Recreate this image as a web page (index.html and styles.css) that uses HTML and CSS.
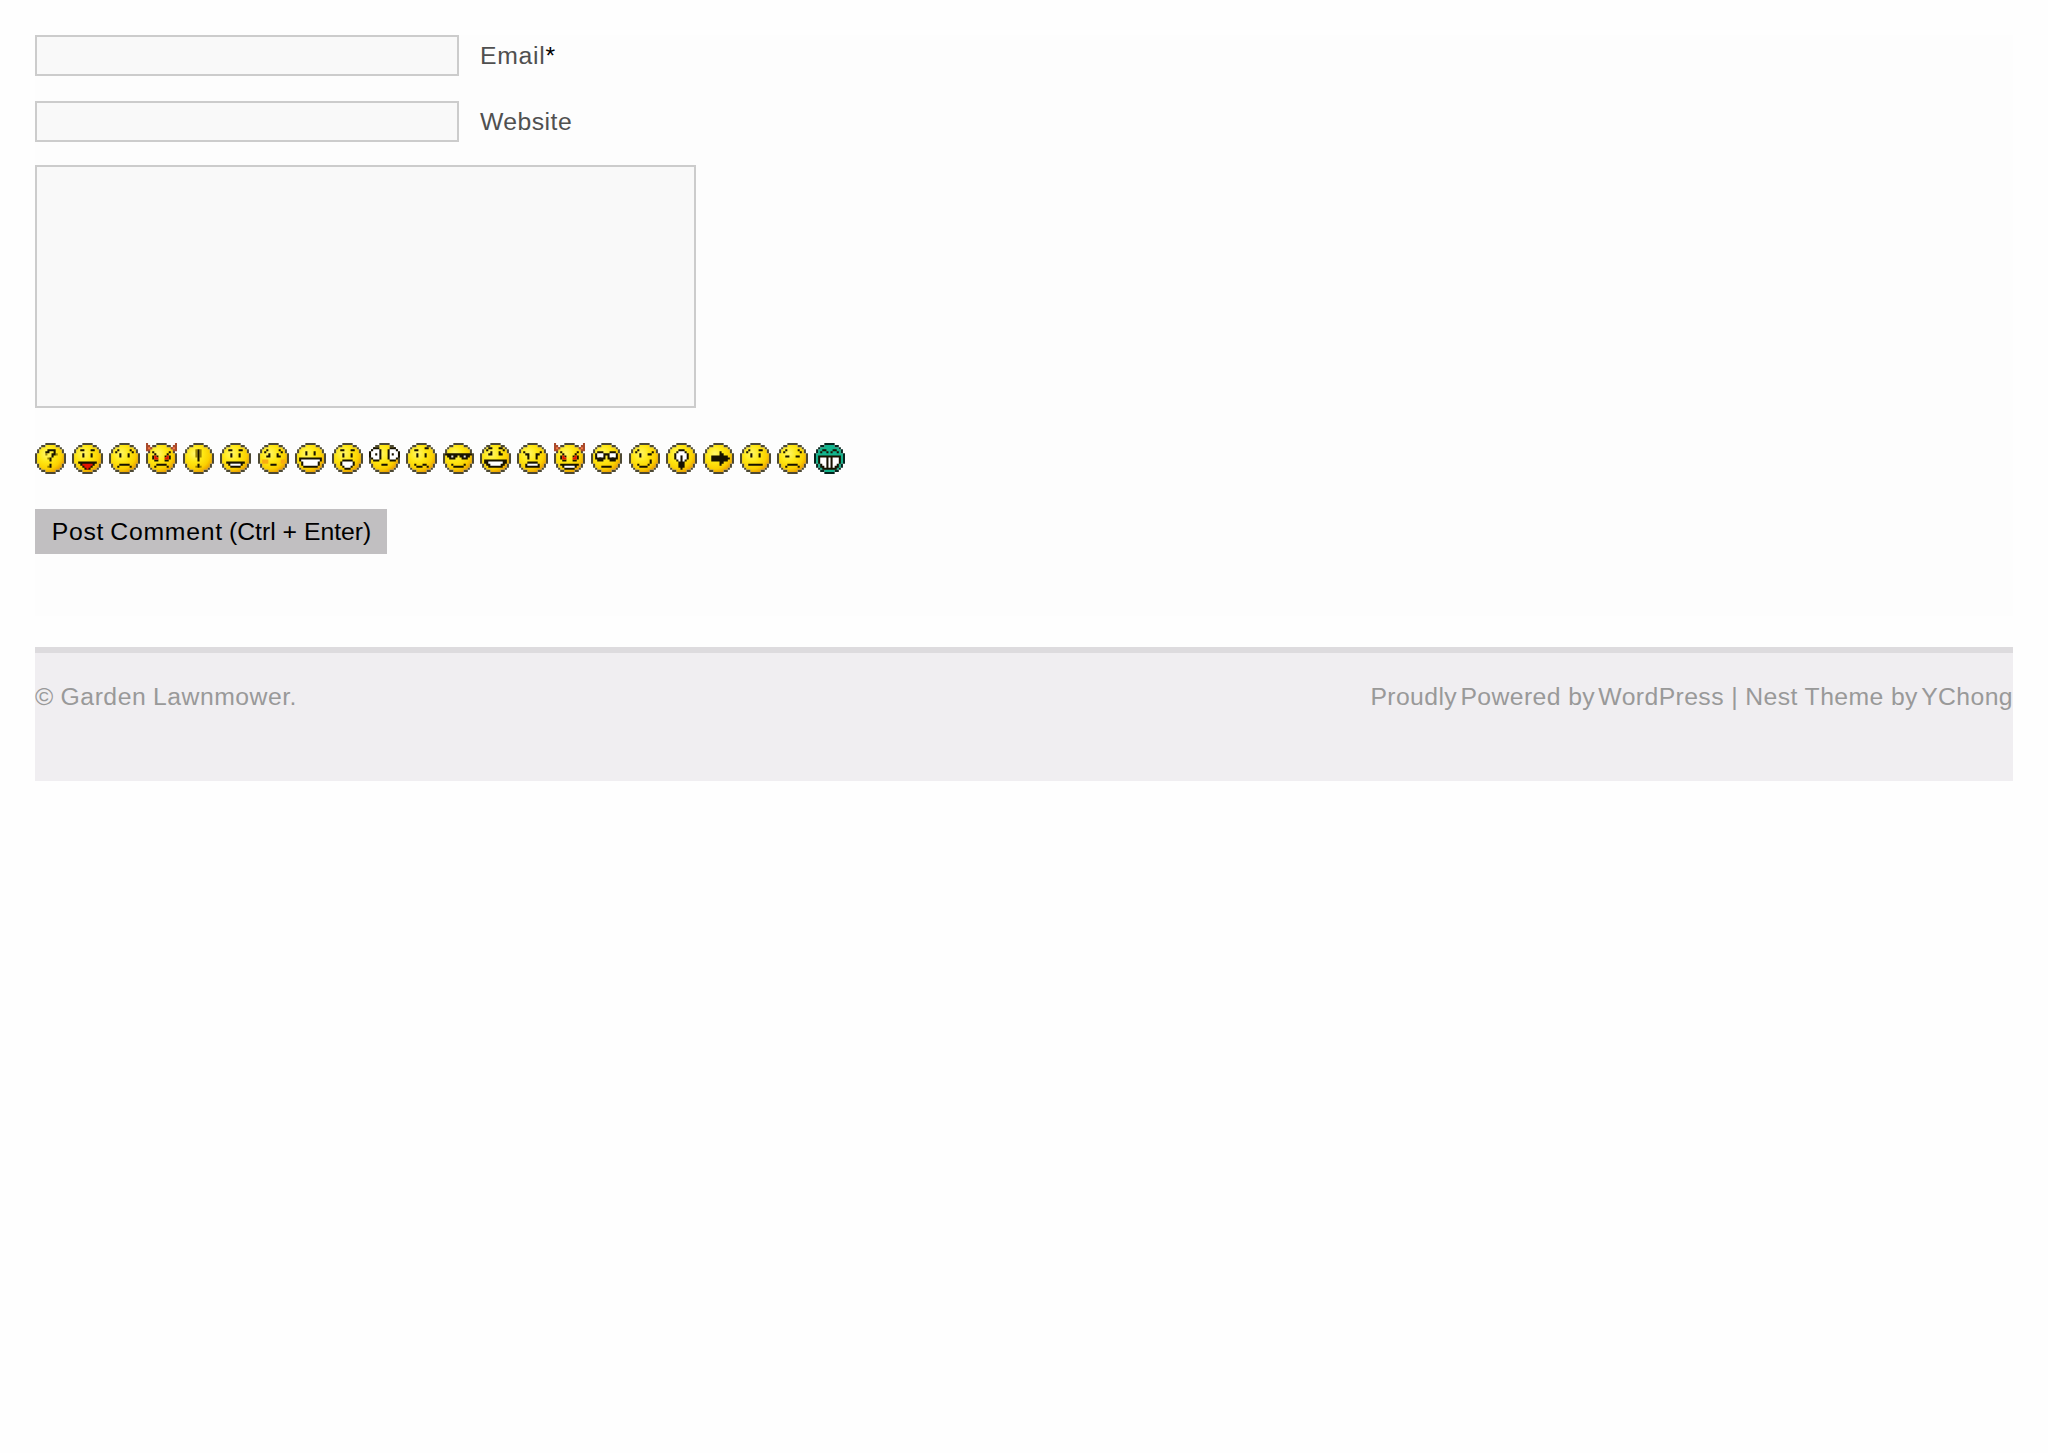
FILE: index.html
```
<!DOCTYPE html>
<html lang="en">
<head>
    <meta charset="UTF-8">
    <title>Garden Lawnmower</title>
    <link rel="stylesheet" href="styles.css">
</head>
<body>
<!-- shared smiley shapes, one unit is one pixel -->
<svg class="sprite" aria-hidden="true">
    <defs>
        <radialGradient id="yellow" cx="0.36" cy="0.32" r="0.75">
            <stop offset="0" stop-color="#fff66a"/>
            <stop offset="0.4" stop-color="#ffe815"/>
            <stop offset="0.75" stop-color="#fbd000"/>
            <stop offset="1" stop-color="#e99a00"/>
        </radialGradient>
        <g id="face">
            <path class="fill" d="M4.5.5h5v1h2v1h1v2h1v5h-1v2h-1v1h-2v1h-5v-1h-2v-1h-1v-2h-1v-5h1v-2h1v-1h2z"/>
            <path class="ring" d="M5 0h4M3 1h1M10 1h1M2 2h0M12 2h0M1 3v1M13 3v1M0 5v4M14 5v4M1 10v1M13 10v1M2 12h0M12 12h0M3 13h1M10 13h1M5 14h4"/>
        </g>
        <g id="horns">
            <path class="horn" d="M0 0v3M1 1v2M2 2h0M14 0v3M13 1v2M12 2h0"/>
            <path class="horn-light" d="M1 2h0M13 2h0"/>
        </g>
    </defs>
</svg>
<div class="page">
    <form class="comment-form">
        <div class="field">
            <input id="email" class="input" type="text">
            <label for="email" class="wide">Email<span class="required">*</span></label>
        </div>
        <div class="field">
            <input id="url" class="input" type="text">
            <label for="url">Website</label>
        </div>
        <textarea class="comment" aria-label="Comment"></textarea>
        <div class="smilies">
            <svg viewBox="-.5 -.5 15 15"><use href="#face"/><path class="soft" d="M5 5h0M10 5h0M6 7h0M6 11h0"/><path d="M5 4h1M6 3h3M9 4v1M8 5v1M7 7v1M7 10v1"/></svg>
            <svg viewBox="-.5 -.5 15 15"><use href="#face"/><path d="M4 3h1M9 3h1M5 5v1M9 5v1M3 9h8M4 10h6M5 11h4M6 12h2"/><path class="red" d="M5 10h4M6 11h2M7 12h0"/></svg>
            <svg viewBox="-.5 -.5 15 15"><use href="#face"/><path d="M3 4h0M4 3h0M10 3h0M11 4h0M5 5v1M9 5v1M4 11h0M5 10h4M10 11h0"/></svg>
            <svg viewBox="-.5 -.5 15 15"><use href="#face"/><use href="#horns"/><path d="M3 4h0M4 5h0M5 6h0M9 6h0M10 5h0M11 4h0M3 6v1M4 8h1M11 6v1M9 8h1M4 11h0M5 10h4M10 11h0"/><path class="red" d="M4 6v1M5 7h0M10 6v1M9 7h0"/></svg>
            <svg viewBox="-.5 -.5 15 15"><use href="#face"/><path class="soft" d="M6 3v3M8 3v3M6 11h0M8 11h0"/><path d="M7 3v5M7 10v1"/></svg>
            <svg viewBox="-.5 -.5 15 15"><use href="#face"/><path d="M4 3h1M9 3h1M5 5v1M9 5v1M3 9h8M4 10h6M5 11h4"/><path class="white" d="M5 10h4"/></svg>
            <svg viewBox="-.5 -.5 15 15"><use href="#face"/><path class="blush" d="M2 8h2M2 9h2M11 8h1M11 9h1"/><path d="M3 4h0M4 3h0M10 3h0M11 4h0M4 6h1M5 5h0M9 5h0M9 6h1M6 10h2"/></svg>
            <svg viewBox="-.5 -.5 15 15"><use href="#face"/><path d="M5 4v1M9 4v1M2 7h10M2 8h10M3 9h8M3 10h8M4 11h6"/><path class="white" d="M3 8h8M4 9h6M4 10h6"/></svg>
            <svg viewBox="-.5 -.5 15 15"><use href="#face"/><path d="M4 3h1M9 3h1M5 5v1M9 5v1M5 8h4M4 9h6M4 10h6M5 11h4M6 12h2"/><path class="white" d="M5 9h4M5 10h4M6 11h2"/></svg>
            <svg viewBox="-.5 -.5 15 15"><use href="#face"/><path d="M2 2h2M1 3h4M0 4h5M0 5h5M0 6h5M1 7h4M2 8h2M10 2h2M9 3h4M9 4h5M9 5h5M9 6h5M9 7h4M10 8h2M6 10h2"/><path class="white" d="M2 3h2M1 4h3M1 5h3M1 6h3M2 7h2M10 3h2M10 4h3M10 5h3M10 6h3M10 7h2"/><path d="M3 5h0M11 5h0"/></svg>
            <svg viewBox="-.5 -.5 15 15"><use href="#face"/><path d="M4 3h1M9 2h1M5 5v1M9 5v1M4 10h0M5 11h2M8 10h1M10 11h0"/></svg>
            <svg viewBox="-.5 -.5 15 15"><use href="#face"/><path d="M1 5h12M2 6h4M3 7h2M8 6h4M9 7h2M4 10h0M5 11h4M10 10h0"/><path class="shine" d="M4 6h0M10 6h0"/></svg>
            <svg viewBox="-.5 -.5 15 15"><use href="#face"/><path d="M3 3h0M4 2h1M5 4v1M4 5h0M9 2h1M11 3h0M9 4v1M10 5h0M2 8h10M2 9h10M3 10h8M4 11h6"/><path class="white" d="M4 9h6M5 10h4"/></svg>
            <svg viewBox="-.5 -.5 15 15"><use href="#face"/><path d="M3 4h0M4 5h1M5 6v1M11 4h0M9 5h1M9 6v1M5 9h4M4 10h6M4 11h6"/><path class="white" d="M5 10h4"/></svg>
            <svg viewBox="-.5 -.5 15 15"><use href="#face"/><use href="#horns"/><path d="M3 4h0M4 5h0M5 6h0M9 6h0M10 5h0M11 4h0M3 6v1M4 8h1M11 6v1M9 8h1M3 10h8M4 11h6M5 12h4"/><path class="red" d="M4 6v1M5 7h0M10 6v1M9 7h0"/><path class="white" d="M5 11h4"/></svg>
            <svg viewBox="-.5 -.5 15 15"><use href="#face"/><path d="M3 4h2M2 5h4M2 6h4M2 7h4M3 8h2M9 4h2M8 5h4M8 6h4M8 7h4M9 8h2M6 5h2M5 11h4"/><path class="white" d="M3 5h2M3 6h2M9 5h2M9 6h2"/><path d="M4 7h0M10 7h0"/></svg>
            <svg viewBox="-.5 -.5 15 15"><use href="#face"/><path d="M3 4h0M4 3h0M5 5v1M9 5h1M11 4h0M4 10h0M5 11h3M9 10h0M10 8v1"/></svg>
            <svg viewBox="-.5 -.5 15 15"><use href="#face"/><path d="M6 3h2M5 4h4M4 5h6M4 6h6M4 7h6M5 8h4M6 9h2M6 10h2M6 11h2M7 12h0"/><path class="white" d="M6 4h2M5 5h4M5 6h4M5 7h4M6 8h2"/><path d="M7 6v4"/></svg>
            <svg viewBox="-.5 -.5 15 15"><use href="#face"/><path d="M4 6h7M4 7h8M4 8h7M8 4v6M9 5v4M10 6v2"/></svg>
            <svg viewBox="-.5 -.5 15 15"><use href="#face"/><path d="M3 4h0M4 3h0M9 3h1M5 5v1M9 5v1M4 10h6"/></svg>
            <svg viewBox="-.5 -.5 15 15"><use href="#face"/><path d="M3 4h0M4 3h0M10 3h0M11 4h0M4 6h1M9 6h1M4 11h0M5 10h4M10 11h0"/></svg>
            <svg class="green" viewBox="-.5 -.5 15 15"><use href="#face"/><path d="M3 4h0M4 3h1M6 4h0M8 4h0M9 3h1M11 4h0M2 6h10M2 7h10M2 8h10M2 9h10M3 10h8M3 11h8M4 12h6"/><path class="white" d="M3 7v2M4 7v3M5 7v4M7 7v4M9 7v4M10 7v3M11 7v2"/></svg>
        </div>
        <button class="submit" type="button">Post Comment <span class="shortcut">(Ctrl + Enter)</span></button>
    </form>
    <footer class="footer">
        <div class="copyright">© Garden Lawnmower.</div>
        <div class="credit">Proudly <span class="kern">Powered</span> by <a class="kern">WordPress</a> | Nest Theme by <a class="kern">YChong</a></div>
    </footer>
</div>
</body>
</html>
```
FILE: styles.css
```
* {
    box-sizing: border-box;
    margin: 0;
    padding: 0;
}

body {
    background: #fefefe;
    font-family: "Liberation Sans", Arial, sans-serif;
    font-size: 24.75px;
    line-height: 28px;
    color: #000;
}

.sprite {
    position: absolute;
    width: 0;
    height: 0;
}

.page {
    padding: 35px 35px 0;
}

.comment-form {
    display: flex;
    flex-direction: column;
    align-items: flex-start;
    height: 581px;
    background: #fdfdfd;
}

.field {
    display: flex;
    align-items: center;
    gap: 21px;
    height: 41px;
    margin-bottom: 25px;
    color: #505050;
    letter-spacing: 0.45px;
}

.wide {
    letter-spacing: 0.7px;
}

.required {
    color: #000;
}

.input,
.comment {
    background: #f9f9f9;
    border: 2px solid #ccc;
    border-radius: 0;
    outline: none;
}

.input {
    width: 424px;
    height: 41px;
}

.comment {
    display: block;
    width: 661px;
    height: 243px;
    margin-top: -2px;
    resize: none;
}

.smilies {
    display: flex;
    gap: 6.1px;
    height: 31px;
    margin-top: 35px;
}

.smilies svg {
    width: 31px;
    height: 31px;
    fill: none;
    stroke: #171200;
    stroke-width: 1;
    stroke-linecap: square;
}

.fill {
    fill: var(--skin, url(#yellow));
    stroke: none;
}

.ring {
    stroke: var(--ring, #4d4934);
}

.horn {
    stroke: #a94a2c;
}

.horn-light {
    stroke: #f77b45;
}

.red {
    stroke: #e51400;
}

.white {
    stroke: #fff;
}

.soft {
    stroke: #9a8200;
}

.shine {
    stroke: #ddd;
}

.blush {
    stroke: #f9ac12;
}

.green {
    --skin: #12b48c;
    --ring: #07241d;
}

.submit {
    width: 352px;
    height: 45px;
    margin-top: 35px;
    padding-left: 1px;
    border: none;
    background: #c1bfc1;
    font: inherit;
    letter-spacing: 0.75px;
    word-spacing: -1.5px;
    white-space: nowrap;
    color: #000;
}

.shortcut {
    letter-spacing: 0;
    word-spacing: 0;
}

.footer {
    display: flex;
    justify-content: space-between;
    height: 134px;
    margin-top: 31px;
    padding-top: 30px;
    border-top: 6px solid #dddbde;
    background: #f0eef1;
    color: #999;
    letter-spacing: 0.4px;
}

.copyright {
    letter-spacing: 0.5px;
    word-spacing: -0.5px;
}

.kern {
    margin-left: -4px;
}
```
